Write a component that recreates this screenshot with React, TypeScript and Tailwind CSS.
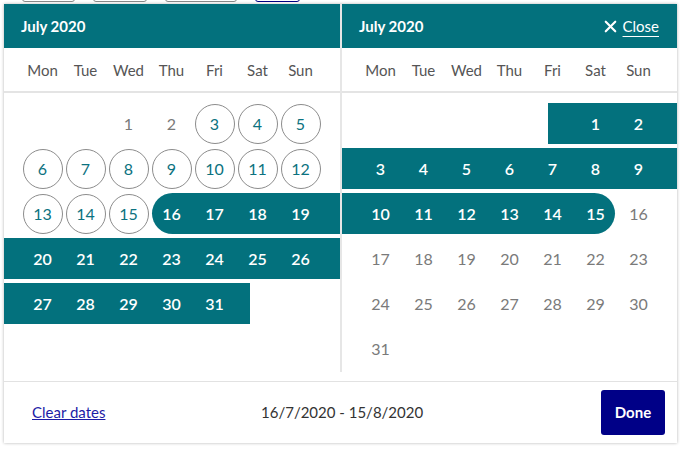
import { X } from 'lucide-react';

const days = ['Mon', 'Tue', 'Wed', 'Thu', 'Fri', 'Sat', 'Sun'];

type Cell = { n?: number; kind?: 'off' | 'ring' | 'sel' | 'plain' };

function Row({ cells, bar }: { cells: Cell[]; bar?: string }) {
  return (
    <div className="relative h-[41px]">
      {bar && <div className={`absolute top-0 bottom-0 bg-[#03717d] ${bar}`} />}
      <div className="relative grid grid-cols-[repeat(7,43px)] pl-[17px] h-full">
        {cells.map((c, i) => (
          <div key={i} className="flex items-center justify-center">
            {c.n !== undefined && (
              <div
                className={
                  c.kind === 'ring'
                    ? 'w-[40px] h-[40px] rounded-full border border-[#8c8c8c] text-[#0b7280] flex items-center justify-center'
                    : c.kind === 'sel'
                    ? 'text-white font-semibold'
                    : 'text-[#7a7a7a]'
                }
              >
                {c.n}
              </div>
            )}
          </div>
        ))}
      </div>
    </div>
  );
}

function Header({ close }: { close?: boolean }) {
  return (
    <>
      <div className="h-[44px] bg-[#03717d] flex items-center justify-between pl-[17px] pr-[18px] text-white">
        <span className="font-bold text-[15px]">July 2020</span>
        {close && (
          <span className="flex items-center gap-[3px] text-[15px]">
            <X size={19} strokeWidth={2.7} />
            <span className="underline underline-offset-[4px]">Close</span>
          </span>
        )}
      </div>
      <div className="h-[45px] border-b-2 border-[#e4e4e4] grid grid-cols-[repeat(7,43px)] pl-[17px] items-center text-[15px] text-[#555]">
        {days.map((d) => (
          <div key={d} className="text-center pt-[1px]">
            {d}
          </div>
        ))}
      </div>
    </>
  );
}

const e: Cell = {};
const r = (n: number): Cell => ({ n, kind: 'ring' });
const s = (n: number): Cell => ({ n, kind: 'sel' });
const o = (n: number): Cell => ({ n, kind: 'off' });

export default function App() {
  return (
    <div
      className="w-[681px] h-[449px] bg-white overflow-hidden"
      style={{ fontFamily: 'Lato, "Noto Sans", sans-serif' }}
    >
      {/* buttons behind the popup */}
      <div className="h-[2px] relative">
        <div className="absolute left-[22px] top-[-10px] w-[53px] h-[12px] border border-[#888] rounded-[3px]" />
        <div className="absolute left-[93px] top-[-10px] w-[54px] h-[12px] border border-[#888] rounded-[3px]" />
        <div className="absolute left-[165px] top-[-10px] w-[72px] h-[12px] border border-[#888] rounded-[3px]" />
        <div className="absolute left-[255px] top-[-10px] w-[45px] h-[12px] border border-[#000080] rounded-[3px]" />
      </div>

      <div className="ml-[4px] mt-[2px] w-[673px] bg-white shadow-[0_0_3px_rgba(0,0,0,0.3)] flex flex-col">
        <div className="flex">
          <div className="w-[336px]">
            <Header />
            <div className="pt-[10px] flex flex-col gap-[4px] h-[279px]">
              <Row cells={[e, e, o(1), o(2), r(3), r(4), r(5)]} />
              <Row cells={[r(6), r(7), r(8), r(9), r(10), r(11), r(12)]} />
              <Row cells={[r(13), r(14), r(15), s(16), s(17), s(18), s(19)]} bar="left-[148px] right-0 rounded-l-full" />
              <Row cells={[s(20), s(21), s(22), s(23), s(24), s(25), s(26)]} bar="left-0 right-0" />
              <Row cells={[s(27), s(28), s(29), s(30), s(31), e, e]} bar="left-0 w-[246px]" />
            </div>
          </div>
          <div className="w-[2px] bg-[#e6e6e6]" />
          <div className="w-[335px]">
            <Header close />
            <div className="pt-[10px] flex flex-col gap-[4px] h-[279px]">
              <Row cells={[e, e, e, e, e, s(1), s(2)]} bar="left-[206px] right-0" />
              <Row cells={[s(3), s(4), s(5), s(6), s(7), s(8), s(9)]} bar="left-0 right-0" />
              <Row cells={[s(10), s(11), s(12), s(13), s(14), s(15), o(16)]} bar="left-0 w-[273px] rounded-r-full" />
              <Row cells={[o(17), o(18), o(19), o(20), o(21), o(22), o(23)]} />
              <Row cells={[o(24), o(25), o(26), o(27), o(28), o(29), o(30)]} />
              <Row cells={[o(31), e, e, e, e, e, e]} />
            </div>
          </div>
        </div>
        <div className="h-[9px]" />
        <div className="border-t border-[#e2e2e2] h-[62px] flex items-center pl-[28px] pr-[12px] text-[15px]">
          <a href="#" className="text-[#1c1ca6] underline w-[150px]">
            Clear dates
          </a>
          <div className="flex-1 text-[#333] pl-[79px]">16/7/2020 - 15/8/2020</div>
          <button className="w-[64px] h-[45px] rounded-[3px] bg-[#000087] text-white font-bold">Done</button>
        </div>
      </div>
    </div>
  );
}
